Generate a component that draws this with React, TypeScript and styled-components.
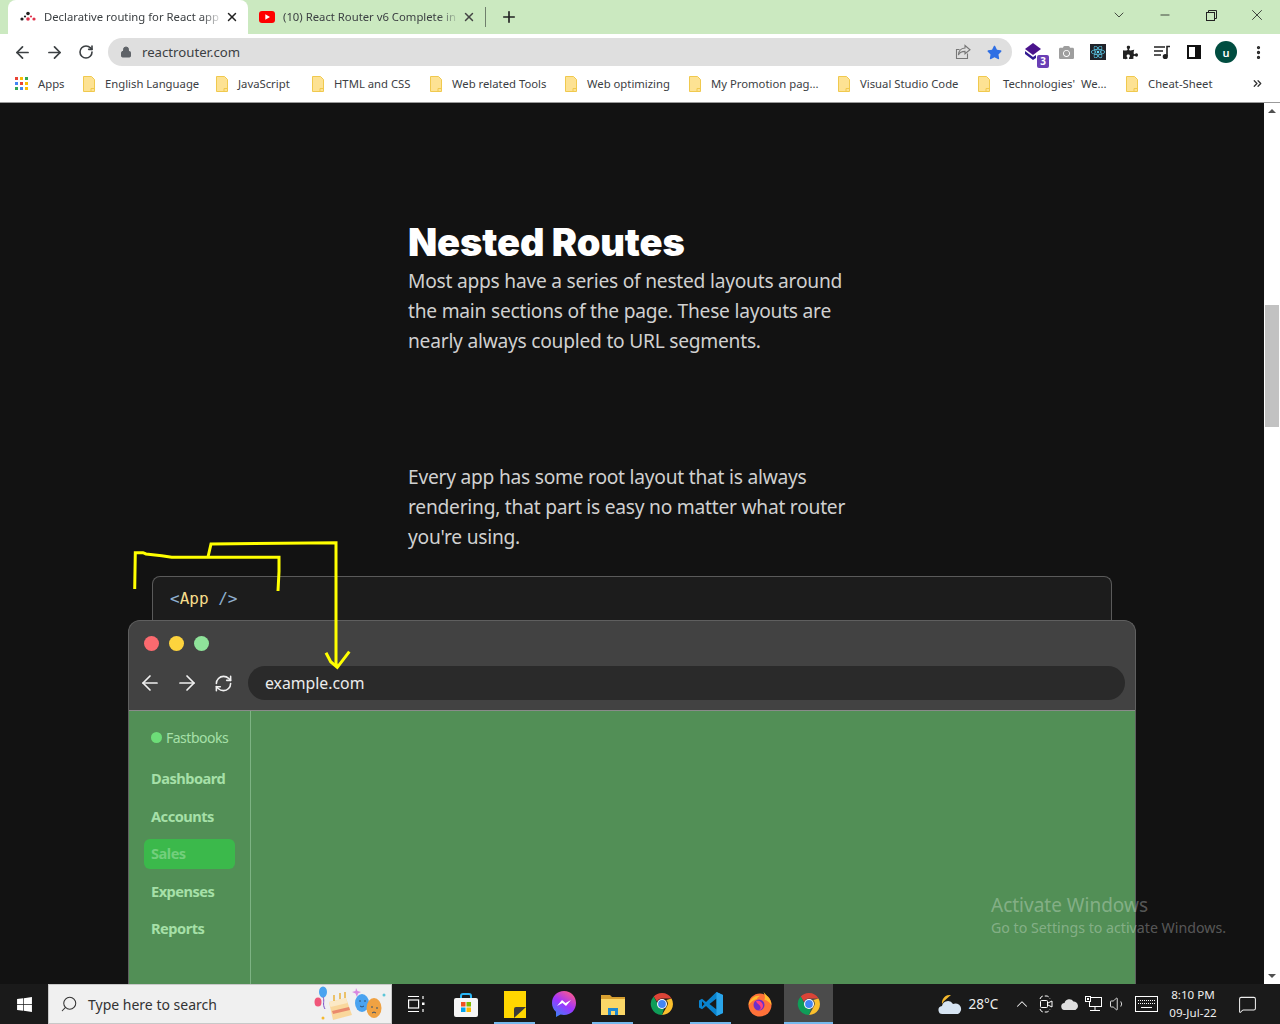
import React from "react";
import styled, { createGlobalStyle } from "styled-components";
import { ArrowLeft, ArrowRight, RotateCw, RefreshCw, X, Plus, Lock, ChevronDown, ChevronUp, Minus, MoreVertical, Search, ChevronsRight, MessageSquare, Volume1 } from "lucide-react";
import { FaStar, FaCamera, FaReact, FaPuzzlePiece, FaWindows } from "react-icons/fa";

const GlobalStyle = createGlobalStyle`
  html, body { margin: 0; padding: 0; height: 1024px; overflow: hidden; background: #121212; }
  * { box-sizing: border-box; }
`;

const uiFont = `"Noto Sans", "Open Sans", sans-serif`;

const Screen = styled.div`
  width: 1280px;
  height: 1024px;
  display: flex;
  flex-direction: column;
  font-family: ${uiFont};
`;

/* ---------- browser chrome ---------- */
const TabStrip = styled.div`
  height: 34px;
  background: #cbe9c0;
  display: flex;
  align-items: flex-end;
  padding-left: 8px;
  color: #3c4043;
  flex: none;
`;
const Tab = styled.div<{ $active?: boolean }>`
  width: ${(p) => (p.$active ? "240px" : "237px")};
  height: 34px;
  background: ${(p) => (p.$active ? "#fff" : "transparent")};
  border-radius: 8px 8px 0 0;
  display: flex;
  align-items: center;
  padding: 0 9px 1px ${(p) => (p.$active ? 12 : 11)}px;
  gap: 8px;
  font-size: 11.3px;
`;
const TabTitle = styled.span`
  flex: 1;
  margin-right: -6px;
  overflow: hidden;
  white-space: nowrap;
  -webkit-mask-image: linear-gradient(to right, #000 88%, transparent);
  mask-image: linear-gradient(to right, #000 88%, transparent);
`;
const TabSep = styled.div`
  width: 1px;
  height: 20px;
  background: #6f7f6c;
  margin-bottom: 7px;
`;
const NewTab = styled.div`
  width: 45px;
  height: 34px;
  display: flex;
  align-items: center;
  justify-content: center;
`;
const WindowControls = styled.div`
  margin-left: auto;
  display: flex;
  height: 34px;
  align-items: flex-start;
  color: #222;
`;
const WinBtn = styled.div<{ $w: number }>`
  width: ${(p) => p.$w}px;
  height: 30px;
  display: flex;
  align-items: center;
  justify-content: center;
`;

const Toolbar = styled.div`
  height: 34px;
  background: #fff;
  display: flex;
  align-items: center;
  padding: 2px 0 0 6px;
  flex: none;
`;
const ToolBtn = styled.div`
  width: 32px;
  height: 32px;
  display: flex;
  align-items: center;
  justify-content: center;
  color: #3c4043;
  position: relative;
  flex: none;
`;
const Omnibox = styled.div`
  width: 904px;
  height: 28px;
  margin: 0 6px 0 6px;
  border-radius: 14px;
  background: #dfdfdf;
  display: flex;
  align-items: center;
  padding: 0 10px 0 12px;
  font-size: 13.2px;
  color: #3c4043;
  gap: 10px;
  flex: none;
`;
const OmniEnd = styled.div`
  margin-left: auto;
  display: flex;
  align-items: center;
  gap: 16px;
`;
const Badge = styled.span`
  position: absolute;
  right: 1px;
  bottom: 0;
  width: 12px;
  height: 13px;
  background: #6a3fb5;
  border-radius: 2px;
  color: #fff;
  font-size: 10px;
  line-height: 13px;
  text-align: center;
  font-weight: 700;
`;
const ReactTile = styled.div`
  width: 16px;
  height: 16px;
  background: #20232a;
  display: flex;
  align-items: center;
  justify-content: center;
  color: #61dafb;
`;
const Avatar = styled.div`
  width: 22px;
  height: 22px;
  border-radius: 50%;
  background: #004d40;
  color: #fff;
  font-size: 11px;
  font-weight: 600;
  display: flex;
  align-items: center;
  justify-content: center;
`;

const BookmarkBar = styled.div`
  height: 35px;
  background: #fff;
  border-bottom: 1px solid #9a9a9a;
  display: flex;
  align-items: center;
  padding-left: 15px;
  font-size: 11.3px;
  color: #3c4043;
  flex: none;
  padding-bottom: 3px;
`;
const Bookmark = styled.div<{ $w: number; $gap?: number }>`
  width: ${(p) => p.$w}px;
  display: flex;
  align-items: center;
  gap: ${(p) => p.$gap ?? 10}px;
  white-space: pre;
  flex: none;
`;
const AppsGrid = styled.div`
  display: grid;
  grid-template-columns: repeat(3, 3px);
  grid-auto-rows: 3px;
  gap: 2px;
`;
const AppsDot = styled.span<{ $c: string }>`
  background: ${(p) => p.$c};
`;
const Overflow = styled.div`
  margin-left: auto;
  margin-right: 16px;
  display: flex;
`;

/* ---------- page ---------- */
const Viewport = styled.div`
  flex: 1;
  min-height: 0;
  display: flex;
  position: relative;
`;
const Page = styled.main`
  width: 1264px;
  background: #121212;
  overflow: hidden;
  padding-top: 116px;
  position: relative;
`;
const Article = styled.section`
  width: 448px;
  margin-left: 408px;
  color: #d0d0d0;
`;
const Heading = styled.h2`
  margin: 0;
  font-family: Inter, sans-serif;
  font-weight: 900;
  font-size: 38px;
  line-height: 47px;
  letter-spacing: -0.12px;
  color: #fff;
`;
const Para = styled.p<{ $gap?: number }>`
  margin: ${(p) => p.$gap ?? 0}px 0 0;
  font-size: 19.2px;
  letter-spacing: -0.24px;
  line-height: 30px;
`;
const CodePanel = styled.div`
  width: 960px;
  height: 44px;
  margin: 24px 0 0 152px;
  background: #1c1c1c;
  border: 1px solid #5a5a5a;
  border-bottom: 0;
  border-radius: 8px 8px 0 0;
  padding: 11px 17px;
  font-family: "DejaVu Sans Mono", "Liberation Mono", monospace;
  font-size: 16px;
  line-height: 22px;
  white-space: pre;
`;
const Punct = styled.span`
  color: #8fb0cf;
`;
const Tag = styled.span`
  color: #f6dd8b;
`;
const DemoWindow = styled.div`
  width: 1008px;
  margin-left: 128px;
  background: #424242;
  border: 1px solid #5f5f5f;
  border-bottom: 0;
  border-radius: 12px 12px 0 0;
  height: 400px;
`;
const Lights = styled.div`
  display: flex;
  gap: 10px;
  padding: 15px 0 0 15px;
`;
const Light = styled.span<{ $c: string }>`
  width: 15px;
  height: 15px;
  border-radius: 50%;
  background: ${(p) => p.$c};
`;
const DemoNav = styled.div`
  display: flex;
  align-items: center;
  height: 34px;
  margin-top: 15px;
  padding-left: 2px;
  color: #f0f0f0;
`;
const DemoNavBtn = styled.div`
  width: 37px;
  display: flex;
  justify-content: center;
  flex: none;
`;
const DemoUrl = styled.div`
  width: 877px;
  height: 34px;
  margin-left: 6px;
  border-radius: 17px;
  background: #2a2a2a;
  color: #ececec;
  font-size: 15.8px;
  line-height: 34px;
  padding-left: 17px;
`;
const DemoBody = styled.div`
  margin-top: 10px;
  border-top: 1px solid #8a8a8a;
  background: #528f56;
  height: 300px;
`;
const DemoSide = styled.nav`
  width: 122px;
  height: 100%;
  border-right: 1px solid #7db383;
  padding: 15px 15px 0;
  color: #a6e0a8;
  font-size: 14.6px;
`;
const Brand = styled.div`
  display: flex;
  align-items: center;
  gap: 4px;
  height: 22px;
  padding-left: 7px;
  font-size: 14px;
  letter-spacing: -0.5px;
  margin-bottom: 16px;
`;
const BrandDot = styled.span`
  width: 11px;
  height: 11px;
  border-radius: 50%;
  background: #6ddd78;
`;
const SideLink = styled.div<{ $active?: boolean }>`
  height: 30px;
  margin-bottom: 7.6px;
  line-height: 28px;
  padding-left: 7px;
  font-weight: 700;
  border-radius: 6px;
  letter-spacing: -0.5px;
  white-space: nowrap;
  background: ${(p) => (p.$active ? "#3bb94b" : "transparent")};
  color: ${(p) => (p.$active ? "#72cf7c" : "#a6e0a8")};
`;
const Annotation = styled.svg`
  position: absolute;
  top: 0;
  left: 0;
  width: 1264px;
  height: 881px;
  pointer-events: none;
`;
const Watermark = styled.div`
  position: absolute;
  left: 991px;
  top: 789px;
  color: rgba(255, 255, 255, 0.3);
  font-size: 14.2px;
  line-height: 20px;
  white-space: nowrap;
`;
const WatermarkTitle = styled.div`
  font-size: 19px;
  line-height: 26px;
`;

const Scrollbar = styled.div`
  width: 16px;
  background: #fff;
  display: flex;
  flex-direction: column;
  align-items: center;
  justify-content: space-between;
  position: relative;
  color: #505050;
`;
const ScrollArrow = styled.div<{ $up?: boolean }>`
  height: 16px;
  display: flex;
  align-items: center;
  &::before {
    content: "";
    border-left: 4px solid transparent;
    border-right: 4px solid transparent;
    ${(p) => (p.$up ? "border-bottom: 4px solid #505050;" : "border-top: 4px solid #505050;")}
  }
`;
const ScrollThumb = styled.div`
  position: absolute;
  top: 202px;
  left: 1px;
  width: 14px;
  height: 122px;
  background: #c2c2c2;
`;

/* ---------- taskbar ---------- */
const Taskbar = styled.footer`
  height: 40px;
  flex: none;
  background: #1a1a1a;
  display: flex;
  align-items: stretch;
  color: #fff;
`;
const StartBtn = styled.div`
  width: 48px;
  display: flex;
  align-items: center;
  justify-content: center;
`;
const SearchBox = styled.div`
  width: 344px;
  background: #f0f0f0;
  border: 1px solid #c8c8c8;
  color: #333;
  display: flex;
  align-items: center;
  padding-left: 11px;
  gap: 10px;
  font-size: 14px;
`;
const Doodle = styled.svg`
  margin-left: auto;
  margin-right: 3px;
`;
const TaskIcon = styled.div<{ $open?: boolean; $current?: boolean }>`
  width: 49px;
  display: flex;
  align-items: center;
  justify-content: center;
  position: relative;
  background: ${(p) => (p.$current ? "#4b4b4b" : "transparent")};
  &::after {
    content: "";
    display: ${(p) => (p.$open ? "block" : "none")};
    position: absolute;
    bottom: 0;
    height: 2px;
    left: ${(p) => (p.$current ? 0 : 4)}px;
    right: ${(p) => (p.$current ? 0 : 4)}px;
    background: #76b9ed;
  }
`;
const Tray = styled.div`
  margin-left: auto;
  display: flex;
  align-items: center;
  font-size: 13.5px;
  padding-right: 10px;
`;
const TrayItem = styled.div<{ $w: number; $pr?: number }>`
  width: ${(p) => p.$w}px;
  padding-right: ${(p) => p.$pr ?? 0}px;
  display: flex;
  align-items: center;
  justify-content: center;
  white-space: nowrap;
  color: #eee;
`;
const Clock = styled.div`
  width: 62px;
  text-align: center;
  font-size: 11.6px;
  line-height: 18px;
  white-space: nowrap;
  color: #eee;
`;

/* ---------- little drawings ---------- */
const Folder = () => (
  <svg width="12" height="16" viewBox="0 0 12 16">
    <path d="M.5.5h8l3 3v12H.5z" fill="#fde293" stroke="#f0c94e" />
    <path d="M8 15.5v-3h3.5" fill="none" stroke="#f0c94e" />
  </svg>
);

const RouterLogo = () => (
  <svg width="16" height="12" viewBox="0 0 16 12">
    <circle cx="2" cy="8" r="1.6" fill="#222" />
    <circle cx="8" cy="2.5" r="1.8" fill="#222" />
    <circle cx="8" cy="8" r="1.8" fill="#e0324b" />
    <circle cx="14" cy="8" r="1.6" fill="#e0324b" />
    <circle cx="5" cy="5.5" r="1.1" fill="#222" />
    <circle cx="11" cy="5.5" r="1.1" fill="#e0324b" />
  </svg>
);

const YouTube = () => (
  <svg width="16" height="12" viewBox="0 0 16 12">
    <rect width="16" height="12" rx="3" fill="#f00" />
    <path d="M6.3 3.2v5.6L11 6z" fill="#fff" />
  </svg>
);

const Share = () => (
  <svg width="16" height="16" viewBox="0 0 16 16" fill="none" stroke="#777" strokeWidth="1.1">
    <path d="M10 1.5l5 4.3-5 4V7.4C6.5 7.4 4.5 8.6 3.4 11 3.6 7 6 4.3 10 4z" />
    <path d="M12.5 9.5v5h-11V5.5h3" />
  </svg>
);

const ExtCube = () => (
  <svg width="20" height="20" viewBox="0 0 20 20">
    <path d="M9 1l8 6-8 6-8-6z" fill="#4a148c" />
    <path d="M1 9l8 6 3-2v3l-3 2-8-6z" fill="#311b92" />
  </svg>
);

const Queue = () => (
  <svg width="18" height="16" viewBox="0 0 18 16" fill="none" stroke="#222" strokeWidth="1.6">
    <path d="M1 3h11M1 7h9M1 11h7" />
    <path d="M14 12V2.5h3" />
    <circle cx="12.3" cy="12.5" r="1.8" fill="#222" />
  </svg>
);

const SidePanel = () => (
  <svg width="14" height="14" viewBox="0 0 14 14">
    <path d="M0 0h14v14H0z" fill="#111" />
    <path d="M2 2h6v10H2z" fill="#fff" />
  </svg>
);

const ChromeIcon = () => (
  <svg width="24" height="24" viewBox="0 0 24 24">
    <path d="M12 1a11 11 0 0 1 9.5 5.5H12a5.5 5.5 0 0 0-5 3.2L3.7 4.6A11 11 0 0 1 12 1z" fill="#db4437" />
    <path d="M21.5 6.5A11 11 0 0 1 12 23l4.7-8.2A5.5 5.5 0 0 0 16.3 8z" fill="#fbc02d" />
    <path d="M12 23A11 11 0 0 1 3.7 4.6L8 12.8a5.5 5.5 0 0 0 6 4z" fill="#0f9d58" />
    <circle cx="12" cy="12" r="5" fill="#fff" />
    <circle cx="12" cy="12" r="3.9" fill="#4285f4" />
  </svg>
);

const TaskView = () => (
  <svg width="17" height="18" viewBox="0 0 17 18" fill="none" stroke="#fff" strokeWidth="1.2">
    <path d="M0 1.5h11M0 16.5h11" />
    <rect x=".6" y="5" width="10" height="8" />
    <path d="M15 1v3M15 14v3" />
    <rect x="14" y="7.5" width="2.5" height="2.5" fill="#fff" stroke="none" />
  </svg>
);

const StoreIcon = () => (
  <svg width="24" height="25" viewBox="0 0 24 25">
    <path d="M7 7V4a2 2 0 0 1 2-2h6a2 2 0 0 1 2 2v3" fill="none" stroke="#29b6f6" strokeWidth="2" />
    <rect y="6" width="24" height="19" rx="2" fill="#f5f5f5" />
    <rect x="7" y="10" width="4.5" height="4.5" fill="#f25022" />
    <rect x="12.5" y="10" width="4.5" height="4.5" fill="#7fba00" />
    <rect x="7" y="15.5" width="4.5" height="4.5" fill="#00a4ef" />
    <rect x="12.5" y="15.5" width="4.5" height="4.5" fill="#ffb900" />
  </svg>
);

const StickyIcon = () => (
  <svg width="22" height="27" viewBox="0 0 22 27">
    <rect width="22" height="27" fill="#ffd600" />
    <path d="M10 27V18a2 2 0 0 1 2-2h10z" fill="#3a3a3a" />
  </svg>
);

const MessengerIcon = () => (
  <svg width="24" height="26" viewBox="0 0 24 26">
    <defs>
      <linearGradient id="msgGrad" x1="0.2" y1="1" x2="0.8" y2="0">
        <stop offset="0" stopColor="#3b82f6" />
        <stop offset="0.5" stopColor="#a033ff" />
        <stop offset="1" stopColor="#ff5c87" />
      </linearGradient>
    </defs>
    <path d="M12 0C5 0 0 5 0 12c0 3.600 1.300 6.500 4 8.700V26l4.500-2.500c1.100.3 2.300.5 3.500.5 7 0 12-5 12-12S19 0 12 0z" fill="url(#msgGrad)" />
    <path d="M5 15l5-6 3.500 3L19 9l-5 6-3.500-3z" fill="#fff" />
  </svg>
);

const ExplorerIcon = () => (
  <svg width="24" height="22" viewBox="0 0 24 22">
    <path d="M0 2h9l2 2h13v5H0z" fill="#d8a030" />
    <rect y="6" width="24" height="16" fill="#fbd767" />
    <path d="M7 22v-7h10v7h-3v-4h-4v4z" fill="#1e88d2" />
  </svg>
);

const VsCodeIcon = () => (
  <svg width="24" height="24" viewBox="0 0 24 24">
    <path d="M17.500 0L24 3v18l-6.500 3L7 14l-4 3.200L0 15.500v-7L3 6.800 7 10z" fill="#0a84cf" />
    <path d="M17.500 6.500L10.500 12l7 5.500z" fill="#1a1a1a" />
    <path d="M3 9.300v5.400L5.500 12z" fill="#1a1a1a" />
    <path d="M17.500 0L24 3v18l-6.500 3z" fill="#2aa5ea" />
  </svg>
);

const FirefoxIcon = () => (
  <svg width="24" height="26" viewBox="0 0 24 26">
    <circle cx="12" cy="14" r="11.500" fill="#ff7139" />
    <path d="M15 0c1 3 8 6 8.500 14-2-3-5-5-7-5 1-3 0-6-1.500-9z" fill="#ffbd2e" />
    <path d="M.5 14C2 7 8 4 12 5c-2 1-3 2-3 3-4 1-6 3-8.500 6z" fill="#ffbd2e" />
    <circle cx="11" cy="14" r="5.500" fill="#6b2fc9" />
    <path d="M8 10c3-1 7 1 7 5 0 2-2 4-4 4 2-1 2-3 1-4-1-2-3-2-4-5z" fill="#ff3f7f" />
  </svg>
);

const BirthdayDoodle = () => (
  <Doodle width="74" height="38" viewBox="0 0 74 38">
    <ellipse cx="9" cy="7" rx="4" ry="5.500" fill="#4aa3f0" />
    <path d="M9 12c2 4-1 7 2 12" stroke="#7b4fc9" fill="none" />
    <ellipse cx="4" cy="17" rx="3.500" ry="4.500" fill="#f0567a" />
    <path d="M15 17l17-4 6 17-19 5z" fill="#f9d79c" />
    <path d="M15 17l17-4 1.500 5-17 4z" fill="#fbe9c6" />
    <path d="M18 26l17-4 1 3-17 4z" fill="#e98a6d" />
    <path d="M20 16v-6M26 14V8M31 13V7" stroke="#e9b13c" strokeWidth="1.5" />
    <path d="M37 8l1.500 3L42 12l-3 1.500L38 17l-1.500-3.500L33 12l3.500-1z" fill="#d889e0" transform="translate(5 -5)" />
    <ellipse cx="48" cy="18" rx="7" ry="9" fill="#4aa3f0" />
    <ellipse cx="60" cy="23" rx="7.500" ry="10" fill="#f0a243" />
    <path d="M45 16h2M50 16h2M46 21q2 2 4 0M57 22h2M62 23h2M58 28q2-2 4 0" stroke="#33506e" fill="none" />
    <circle cx="70" cy="10" r="1.500" fill="#5cc6d9" />
    <circle cx="9" cy="33" r="1.500" fill="#f5b92e" />
  </Doodle>
);

const Weather = () => (
  <svg width="24" height="24" viewBox="0 0 24 24">
    <path d="M13 3a8 8 0 0 0-9 9c2-4 6-6 9-9z" fill="#f5b92e" />
    <path d="M5 22a4 4 0 0 1-1-8 6 6 0 0 1 11-2 5 5 0 0 1 5 10z" fill="#d6e4f2" />
  </svg>
);

const MeetNow = () => (
  <svg width="14" height="18" viewBox="0 0 14 18" fill="none" stroke="#fff">
    <path d="M1 4a4 4 0 0 1 3-3h4a4 4 0 0 1 3 3M1 14a4 4 0 0 0 3 3h4a4 4 0 0 0 3-3" strokeDasharray="4 2" />
    <rect x="1.500" y="5.500" width="7" height="7" rx="1" />
    <path d="M9 8l4-2v6l-4-2" />
  </svg>
);

const Cloud = () => (
  <svg width="18" height="12" viewBox="0 0 18 12">
    <path d="M4 12a3.500 3.500 0 0 1-.5-7 5 5 0 0 1 9-1.500A4.500 4.500 0 0 1 14.500 12z" fill="#dedede" />
  </svg>
);

const Network = () => (
  <svg width="17" height="17" viewBox="0 0 17 17" fill="none" stroke="#fff">
    <rect x="4.500" y="1.500" width="12" height="9" />
    <rect x=".5" y=".5" width="5" height="5" fill="#1a1a1a" />
    <path d="M10 11v3M5 14.500h10" />
    <rect x="2" y="2" width="2" height="2" fill="#fff" stroke="none" />
  </svg>
);

const Keyboard = () => (
  <svg width="23" height="16" viewBox="0 0 23 16" fill="none" stroke="#fff">
    <rect x=".5" y=".5" width="22" height="15" />
    <path d="M3 4.500h17M3 7.500h17" strokeDasharray="1 1" />
    <path d="M6 11.500h11" />
  </svg>
);

const bookmarks = [
  { name: "English Language", w: 133 },
  { name: "JavaScript", w: 96 },
  { name: "HTML and CSS", w: 118 },
  { name: "Web related Tools", w: 135 },
  { name: "Web optimizing", w: 124 },
  { name: "My Promotion pag...", w: 149 },
  { name: "Visual Studio Code", w: 140 },
  { name: "Technologies'  We...", w: 148, gap: 13 },
  { name: "Cheat-Sheet", w: 100 },
];

const appsColors = ["#ea4335", "#fbbc04", "#34a853", "#4285f4", "#ea4335", "#fbbc04", "#34a853", "#4285f4", "#fbbc04"];

export default function App() {
  return (
    <Screen>
      <GlobalStyle />
      <TabStrip>
        <Tab $active>
          <RouterLogo />
          <TabTitle>Declarative routing for React app</TabTitle>
          <X size={14} strokeWidth={2.5} color="#222" />
        </Tab>
        <Tab>
          <YouTube />
          <TabTitle>(10) React Router v6 Complete in</TabTitle>
          <X size={14} strokeWidth={2.5} color="#444" />
        </Tab>
        <TabSep />
        <NewTab>
          <Plus size={18} strokeWidth={2.2} color="#222" />
        </NewTab>
        <WindowControls>
          <WinBtn $w={46}><ChevronDown size={16} strokeWidth={1.2} /></WinBtn>
          <WinBtn $w={46}><Minus size={14} strokeWidth={1.4} /></WinBtn>
          <WinBtn $w={46}>
            <svg width="11" height="11" viewBox="0 0 11 11" fill="none" stroke="#222">
              <rect x=".5" y="2.500" width="8" height="8" />
              <path d="M2.500 2.500v-2h8v8h-2" />
            </svg>
          </WinBtn>
          <WinBtn $w={46}><X size={18} strokeWidth={1.1} /></WinBtn>
        </WindowControls>
      </TabStrip>

      <Toolbar>
        <ToolBtn><ArrowLeft size={19} strokeWidth={2.2} /></ToolBtn>
        <ToolBtn><ArrowRight size={19} strokeWidth={2.2} /></ToolBtn>
        <ToolBtn><RotateCw size={16} strokeWidth={2.4} /></ToolBtn>
        <Omnibox>
          <Lock size={12} fill="#5f6368" color="#5f6368" />
          <span>reactrouter.com</span>
          <OmniEnd>
            <Share />
            <FaStar size={15} color="#2f6fe4" />
          </OmniEnd>
        </Omnibox>
        <ToolBtn><ExtCube /><Badge>3</Badge></ToolBtn>
        <ToolBtn><FaCamera size={15} color="#9e9e9e" /></ToolBtn>
        <ToolBtn><ReactTile><FaReact size={14} /></ReactTile></ToolBtn>
        <ToolBtn><FaPuzzlePiece size={15} color="#222" /></ToolBtn>
        <ToolBtn><Queue /></ToolBtn>
        <ToolBtn><SidePanel /></ToolBtn>
        <ToolBtn><Avatar>u</Avatar></ToolBtn>
        <ToolBtn><MoreVertical size={17} strokeWidth={2.6} color="#222" /></ToolBtn>
      </Toolbar>

      <BookmarkBar>
        <Bookmark $w={68}>
          <AppsGrid>
            {appsColors.map((c, i) => <AppsDot key={i} $c={c} />)}
          </AppsGrid>
          <span>Apps</span>
        </Bookmark>
        {bookmarks.map((b) => (
          <Bookmark key={b.name} $w={b.w} $gap={b.gap}>
            <Folder />
            <span>{b.name}</span>
          </Bookmark>
        ))}
        <Overflow><ChevronsRight size={13} strokeWidth={2.4} color="#333" /></Overflow>
      </BookmarkBar>

      <Viewport>
        <Page>
          <Article>
            <Heading>Nested Routes</Heading>
            <Para>
              Most apps have a series of nested layouts around the main sections of the page. These layouts are nearly always coupled to URL segments.
            </Para>
            <Para $gap={106}>
              Every app has some root layout that is always rendering, that part is easy no matter what router you're using.
            </Para>
          </Article>
          <CodePanel>
            <Punct>&lt;</Punct><Tag>App</Tag>{" "}<Punct>/&gt;</Punct>
          </CodePanel>
          <DemoWindow>
            <Lights>
              <Light $c="#fb6a6f" />
              <Light $c="#fdd33d" />
              <Light $c="#8fe39a" />
            </Lights>
            <DemoNav>
              <DemoNavBtn><ArrowLeft size={24} strokeWidth={1.7} /></DemoNavBtn>
              <DemoNavBtn><ArrowRight size={24} strokeWidth={1.7} /></DemoNavBtn>
              <DemoNavBtn><RefreshCw size={19} strokeWidth={2} /></DemoNavBtn>
              <DemoUrl>example.com</DemoUrl>
            </DemoNav>
            <DemoBody>
              <DemoSide>
                <Brand><BrandDot />Fastbooks</Brand>
                <SideLink>Dashboard</SideLink>
                <SideLink>Accounts</SideLink>
                <SideLink $active>Sales</SideLink>
                <SideLink>Expenses</SideLink>
                <SideLink>Reports</SideLink>
              </DemoSide>
            </DemoBody>
          </DemoWindow>
          <Annotation viewBox="0 103 1264 881" fill="none" stroke="#ffff00" strokeWidth="3">
            <path d="M134.700 589L135.300 552.700H143L146 554L161.700 555.700L171.700 557.300H279V571.700L278 591" />
            <path d="M208 557L211 544L336 542.700V663L337 667" />
            <path d="M326 652.700L330.700 661.700L337.300 667.300L349.300 651.700" />
          </Annotation>
          <Watermark>
            <WatermarkTitle>Activate Windows</WatermarkTitle>
            Go to Settings to activate Windows.
          </Watermark>
        </Page>
        <Scrollbar>
          <ScrollArrow $up />
          <ScrollThumb />
          <ScrollArrow />
        </Scrollbar>
      </Viewport>

      <Taskbar>
        <StartBtn><FaWindows size={17} /></StartBtn>
        <SearchBox>
          <Search size={18} strokeWidth={1.4} style={{ transform: "scaleX(-1)" }} />
          <span>Type here to search</span>
          <BirthdayDoodle />
        </SearchBox>
        <TaskIcon><TaskView /></TaskIcon>
        <TaskIcon><StoreIcon /></TaskIcon>
        <TaskIcon $open><StickyIcon /></TaskIcon>
        <TaskIcon><MessengerIcon /></TaskIcon>
        <TaskIcon $open><ExplorerIcon /></TaskIcon>
        <TaskIcon><ChromeIcon /></TaskIcon>
        <TaskIcon $open><VsCodeIcon /></TaskIcon>
        <TaskIcon><FirefoxIcon /></TaskIcon>
        <TaskIcon $open $current><ChromeIcon /></TaskIcon>
        <Tray>
          <TrayItem $w={24}><Weather /></TrayItem>
          <TrayItem $w={48} $pr={5}>28°C</TrayItem>
          <TrayItem $w={24}><ChevronUp size={18} strokeWidth={1.4} /></TrayItem>
          <TrayItem $w={24}><MeetNow /></TrayItem>
          <TrayItem $w={24}><Cloud /></TrayItem>
          <TrayItem $w={23}><Network /></TrayItem>
          <TrayItem $w={25}><Volume1 size={18} strokeWidth={1.2} /></TrayItem>
          <TrayItem $w={32}><Keyboard /></TrayItem>
          <Clock>8:10 PM<br />09-Jul-22</Clock>
          <TrayItem $w={46}><MessageSquare size={19} strokeWidth={1.3} /></TrayItem>
        </Tray>
      </Taskbar>
    </Screen>
  );
}
